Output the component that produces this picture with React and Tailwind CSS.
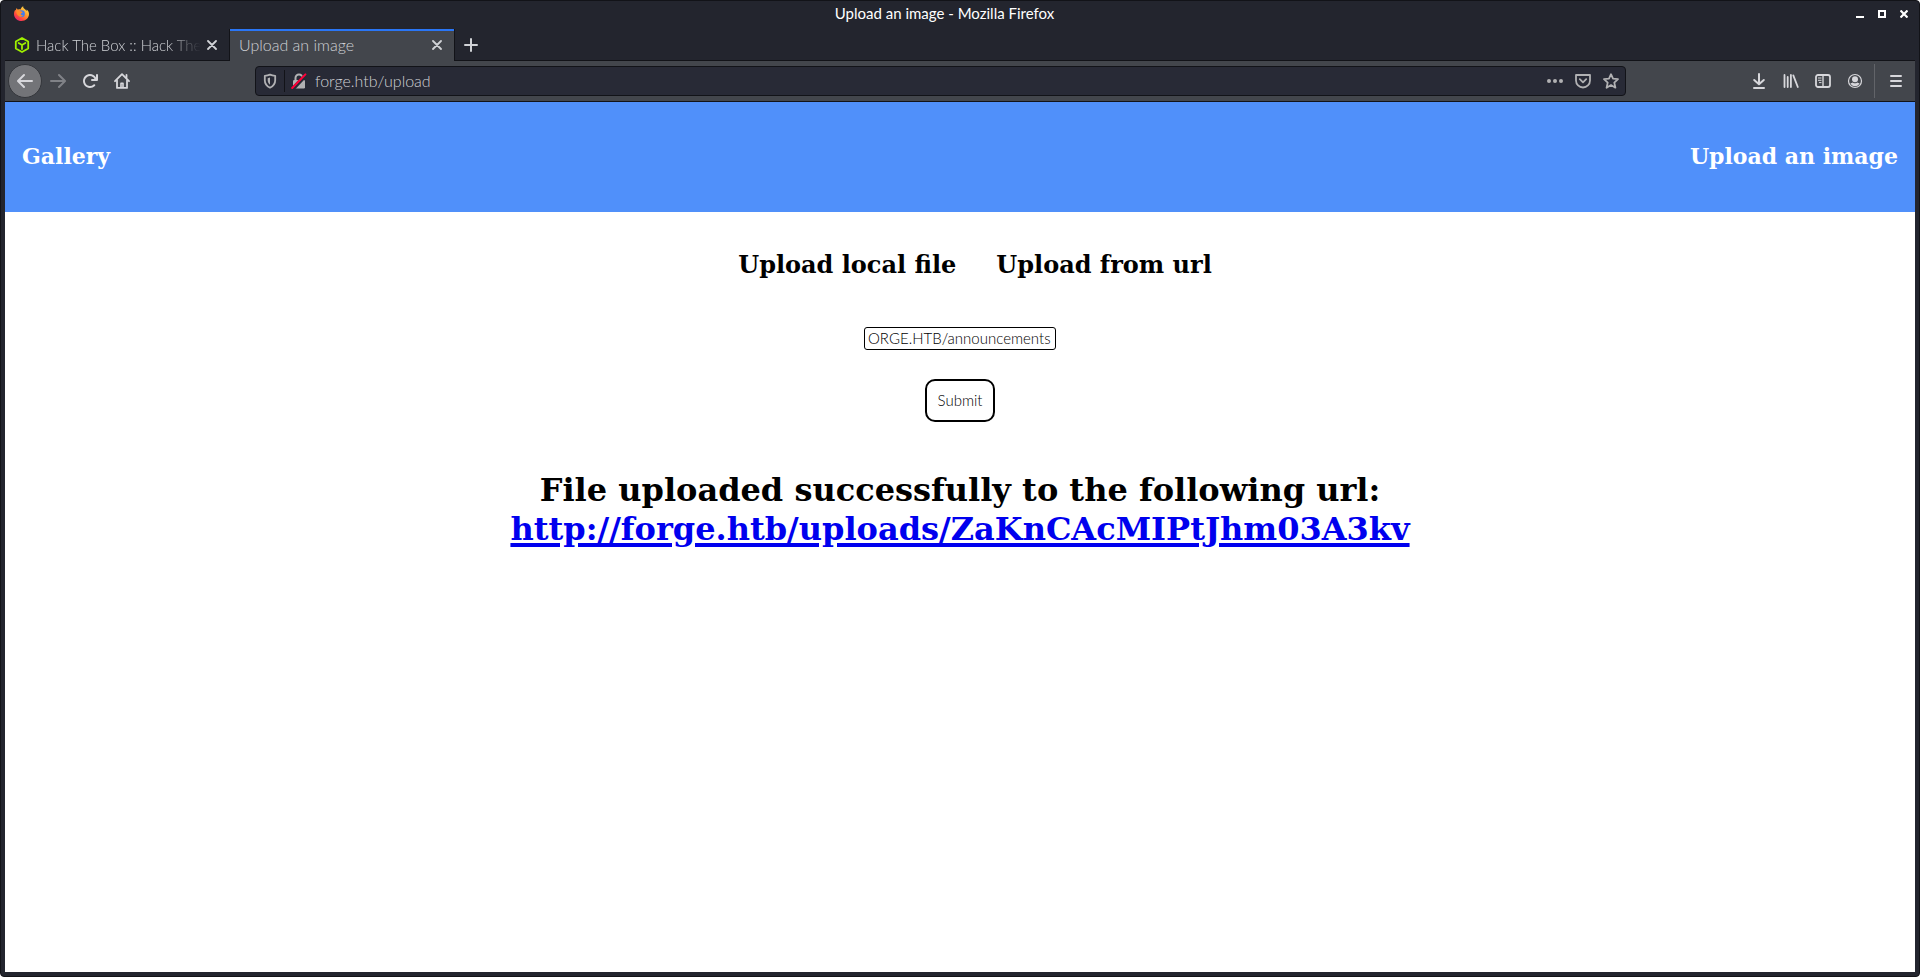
import { useId } from 'react'

const icon = 'block w-4 h-4 shrink-0'

function FirefoxLogo() {
  const id = useId()
  return (
    <svg viewBox="0 0 16 16" className="block w-[15px] h-[15px] shrink-0">
      <defs>
        <linearGradient id={id} x1="0.85" y1="0.1" x2="0.2" y2="0.95">
          <stop offset="0" stopColor="#ffe14a" />
          <stop offset="0.4" stopColor="#ff9a2e" />
          <stop offset="0.75" stopColor="#ff4a3d" />
          <stop offset="1" stopColor="#e8246f" />
        </linearGradient>
      </defs>
      <path fill={`url(#${id})`} d="M3 2.2c.2.8.6 1.3 1.2 1.7 1-.5 2-.5 2.8-.2C7.400 2 8.500.8 9.900.2c-.3 1.200.2 2 1.200 2.800.9.7 1.700 1.300 2.100 2.200.3-.4.4-.9.3-1.500C15.200 5 16 6.800 16 8.600 16 12.800 12.400 16 8 16S0 12.700 0 8.400c0-1.800.6-3.300 1.500-4.400.1.4.2.6.4.8C2.100 3.800 2.500 2.900 3 2.200z" />
      <circle cx="8" cy="8.200" r="3.600" fill="#3f7df0" />
      <path fill="#ff8a2a" d="M2.600 5.200c1.700-1 3.600-.9 5 .6 1 .1 1.700.3 1.600.8-.2.9-1.600.9-2 1.700-.2 1 1 1.900 2.600 1.200-.8 2-3.600 2.500-5.200.9C3 8.800 2.300 6.900 2.600 5.200z" />
    </svg>
  )
}

function CubeLogo() {
  return (
    <svg viewBox="0 0 16 16" className={icon} fill="none" stroke="#9fef00" strokeWidth="1.8" strokeLinejoin="round" strokeLinecap="round">
      <path d="M8 1l6.200 3.500v7L8 15l-6.200-3.500v-7z" />
      <path d="M4.600 6L8 8l3.400-2M8 8v4" />
    </svg>
  )
}

function CloseIcon() {
  return (
    <svg viewBox="0 0 10 10" className="block w-2.5 h-2.5 shrink-0" stroke="currentColor" strokeWidth="1.800" strokeLinecap="round">
      <path d="M1 1l8 8M9 1L1 9" />
    </svg>
  )
}

function BackIcon({ flip }) {
  return (
    <svg viewBox="0 0 16 16" className={flip ? `${icon} -scale-x-100` : icon} fill="currentColor">
      <path d="M15 7H3.414l4.293-4.293a1 1 0 0 0-1.414-1.414l-6 6a1 1 0 0 0 0 1.414l6 6a1 1 0 0 0 1.414-1.414L3.414 9H15a1 1 0 0 0 0-2z" />
    </svg>
  )
}

function ReloadIcon() {
  return (
    <svg viewBox="0 0 16 16" className={icon} fill="currentColor">
      <path d="M15 1a1 1 0 0 0-1 1v2.418A6.995 6.995 0 1 0 8 15a6.954 6.954 0 0 0 4.950-2.050 1 1 0 0 0-1.414-1.414A5.019 5.019 0 1 1 12.549 6H10a1 1 0 0 0 0 2h5a1 1 0 0 0 1-1V2a1 1 0 0 0-1-1z" />
    </svg>
  )
}

function HomeIcon() {
  return (
    <svg viewBox="0 0 16 16" className={icon} fill="none" stroke="currentColor" strokeWidth="1.800" strokeLinecap="round" strokeLinejoin="round">
      <path d="M1 8.200L8 1.200l7 7" />
      <path d="M3 7.500v7.400h10V7.500" />
      <path d="M7 14.500v-4.300h2v4.300" strokeWidth="1.600" />
      <path d="M12.500 2v2.500" />
    </svg>
  )
}

function ShieldIcon() {
  return (
    <svg viewBox="0 0 16 16" className={icon} fill="none" stroke="currentColor" strokeWidth="1.800" strokeLinejoin="round">
      <path d="M8 1.600c2 .9 3.600 1.100 5.200 1.200v4.400c0 3.300-1.800 5.800-5.200 7.500-3.400-1.700-5.200-4.200-5.200-7.500V2.800C4.400 2.700 6 2.500 8 1.600z" />
      <path d="M8 4.600v7.200c-1.500-1.100-2.300-2.600-2.300-4.500V5.200z" fill="currentColor" stroke="none" />
    </svg>
  )
}

function InsecureIcon() {
  return (
    <svg viewBox="0 0 16 16" className={icon}>
      <path d="M4.500 8V5a3.500 3.500 0 0 1 7 0v3" fill="none" stroke="#b1b1b3" strokeWidth="2" />
      <rect x="2" y="7" width="12" height="8.500" rx="1.200" fill="#b1b1b3" />
      <path d="M1.600 16.200L15 1.800" stroke="#282a36" strokeWidth="4" />
      <path d="M1.200 15L14.400 1.400" stroke="#ff0039" strokeWidth="2" strokeLinecap="round" />
    </svg>
  )
}

function DotsIcon() {
  return (
    <svg viewBox="0 0 16 16" className={icon} fill="currentColor">
      <circle cx="2" cy="8" r="2" />
      <circle cx="8" cy="8" r="2" />
      <circle cx="14" cy="8" r="2" />
    </svg>
  )
}

function PocketIcon() {
  return (
    <svg viewBox="0 0 16 16" className={icon} fill="none" stroke="currentColor" strokeWidth="1.800" strokeLinecap="round" strokeLinejoin="round">
      <path d="M1 2h14v5.500a7 7 0 0 1-14 0z" />
      <path d="M4.800 6.200L8 9.300l3.200-3.100" />
    </svg>
  )
}

function StarIcon() {
  return (
    <svg viewBox="0 0 16 16" className={icon} fill="none" stroke="currentColor" strokeWidth="1.800" strokeLinejoin="round">
      <path d="M8 1.200l2 4.500 5 .5-3.700 3.400 1.100 5.100L8 12.100l-4.400 2.600 1.100-5.100L1 6.200l5-.5z" />
    </svg>
  )
}

function DownloadIcon() {
  return (
    <svg viewBox="0 0 16 16" className={icon} fill="none" stroke="currentColor" strokeWidth="2" strokeLinecap="round" strokeLinejoin="round">
      <path d="M8 1v10M3.200 7L8 11.300 12.800 7M3 15h10" />
    </svg>
  )
}

function LibraryIcon() {
  return (
    <svg viewBox="0 0 16 16" className={icon} fill="none" stroke="currentColor" strokeWidth="1.800" strokeLinecap="round">
      <path d="M1.500 2v12M4.700 4v10M7.900 2v12M10.300 2.400l4.500 11.600" />
    </svg>
  )
}

function SidebarIcon() {
  return (
    <svg viewBox="0 0 16 16" className={icon} fill="none" stroke="currentColor" strokeWidth="1.800">
      <rect x="1" y="2" width="14" height="12" rx="2" />
      <path d="M8 2v12" strokeWidth="1.400" />
      <path d="M3 5h3.500M3 7.300h3.500M4 9.600h2.500" strokeWidth="1" />
    </svg>
  )
}

function AccountIcon() {
  return (
    <svg viewBox="0 0 16 16" className={icon} fill="currentColor">
      <circle cx="8" cy="8" r="6.500" fill="none" stroke="currentColor" strokeWidth="1.200" />
      <circle cx="8" cy="6.200" r="3" />
      <path d="M3.400 10.200c1 0 1.700-.3 2.400-.8a3.600 3.600 0 0 0 4.400 0c.7.5 1.400.8 2.400.8A5.100 5.100 0 0 1 8 13.200a5.100 5.100 0 0 1-4.600-3z" />
    </svg>
  )
}

function MenuIcon() {
  return (
    <svg viewBox="0 0 16 16" className={icon} stroke="currentColor" strokeWidth="2" strokeLinecap="round">
      <path d="M3 3h10M3 8h10M3 13h10" />
    </svg>
  )
}

function TitleBar() {
  return (
    <div className="flex items-start h-7 pt-1 pl-[9px] pr-[7px]">
      <div className="flex items-center h-4"><FirefoxLogo /></div>
      <div className="flex-1 pl-1 text-center text-[15px] leading-4 font-normal text-white">Upload an image - Mozilla Firefox</div>
      <div className="flex items-center h-[18px] gap-3.5 text-white">
        <button aria-label="Minimize" className="flex items-end w-2 h-2">
          <span className="block w-2 h-0.5 bg-white" />
        </button>
        <button aria-label="Maximize" className="w-2 h-2 border-2 border-white" />
        <button aria-label="Close window">
          <svg viewBox="0 0 8 8" className="block w-2 h-2" stroke="currentColor" strokeWidth="2.200">
            <path d="M.5.500l7 7M7.500.500l-7 7" />
          </svg>
        </button>
      </div>
    </div>
  )
}

function TabBar() {
  return (
    <div className="flex h-8 leading-5 text-[#d0d2d6]">
      <div className="flex items-center w-[225px] pl-[9px] pr-3 border-b border-r border-[#121318] text-[15px]">
        <CubeLogo />
        <span className="flex-1 ml-1.5 whitespace-nowrap mask-r-from-80% mask-r-to-100%">Hack The Box :: Hack The</span>
        <button aria-label="Close tab" className="ml-1.5"><CloseIcon /></button>
      </div>
      <div className="flex items-center w-56 pb-0.5 pl-[9px] pr-3 border-t-2 border-[#2a76f6] bg-[#43464c]">
        <span className="flex-1">Upload an image</span>
        <button aria-label="Close tab"><CloseIcon /></button>
      </div>
      <div className="flex items-center flex-1 pl-[9px] border-b border-l border-[#121318]">
        <button aria-label="New tab">
          <svg viewBox="0 0 14 14" className="block w-3.5 h-3.5" stroke="currentColor" strokeWidth="2" strokeLinecap="round">
            <path d="M7 1v12M1 7h12" />
          </svg>
        </button>
      </div>
    </div>
  )
}

function Toolbar() {
  return (
    <div className="flex items-center h-[41px] pl-[3px] pr-[11px] bg-[#43464c] border-b border-[#121318] text-[#d7d7db]">
      <div className="flex items-center gap-4">
        <button aria-label="Back" className="flex items-center justify-center w-[34px] h-[34px] rounded-full bg-[#737478] border border-[#34363b]"><BackIcon /></button>
        <button aria-label="Forward" className="-ml-2 text-[#808287]"><BackIcon flip /></button>
        <button aria-label="Reload"><ReloadIcon /></button>
        <button aria-label="Home"><HomeIcon /></button>
      </div>
      <div className="flex items-center flex-1 h-[30px] mx-[125px] px-1.5 rounded border border-[#121318] bg-[#282a36] text-[#b1b1b3]">
        <ShieldIcon />
        <span className="w-px h-[22px] mx-1.5 bg-[#121318]" />
        <InsecureIcon />
        <input aria-label="Address" defaultValue="forge.htb/upload" className="flex-1 min-w-0 ml-2 text-base leading-5 text-[#cfd0d4] outline-none" />
        <div className="flex items-center gap-3">
          <button aria-label="Page actions"><DotsIcon /></button>
          <button aria-label="Save to Pocket"><PocketIcon /></button>
          <button aria-label="Bookmark"><StarIcon /></button>
        </div>
      </div>
      <div className="flex items-center gap-4">
        <button aria-label="Downloads"><DownloadIcon /></button>
        <button aria-label="Library"><LibraryIcon /></button>
        <button aria-label="Sidebars"><SidebarIcon /></button>
        <button aria-label="Account"><AccountIcon /></button>
      </div>
      <span className="w-px h-[34px] ml-[11px] mr-[13px] bg-[#626469]" />
      <button aria-label="Menu"><MenuIcon /></button>
    </div>
  )
}

function UploadPage() {
  return (
    <div className="flex-1 bg-white text-black font-bold font-['DejaVu_Serif',serif]">
      <header className="flex items-center justify-between h-[110px] px-[17px] pb-0.5 bg-[#5090fa] text-[22px] leading-7 text-white">
        <a href="#gallery">Gallery</a>
        <a href="#upload">Upload an image</a>
      </header>
      <main className="flex flex-col items-center pt-[37px]">
        <nav className="flex gap-10 pl-[30px] text-2xl leading-8">
          <button>Upload local file</button>
          <button>Upload from url</button>
        </nav>
        <form className="flex flex-col items-center mt-[46px] font-light font-[Lato,sans-serif] text-black" onSubmit={(e) => e.preventDefault()}>
          <input aria-label="Image url" defaultValue="ORGE.HTB/announcements" className="w-48 h-[23px] pl-[3px] pb-0.5 border border-black rounded-[3px] text-[15px] outline-none" />
          <button className="h-[43px] w-[70px] mt-[29px] border-2 border-black rounded-[10px] text-[15px]">Submit</button>
        </form>
        <h1 className="mt-[49px] text-center text-[32px] leading-[39px]">
          File uploaded successfully to the following url:
          <br />
          <a href="#file" className="text-[#0000ee] underline decoration-4 underline-offset-3">http://forge.htb/uploads/ZaKnCAcMIPtJhm03A3kv</a>
        </h1>
      </main>
    </div>
  )
}

export default function App() {
  return (
    <div className="flex flex-col min-h-screen px-1 pb-1 border border-[#121318] rounded bg-[#23252e] font-light font-[Lato,sans-serif]">
      <TitleBar />
      <TabBar />
      <Toolbar />
      <UploadPage />
    </div>
  )
}
